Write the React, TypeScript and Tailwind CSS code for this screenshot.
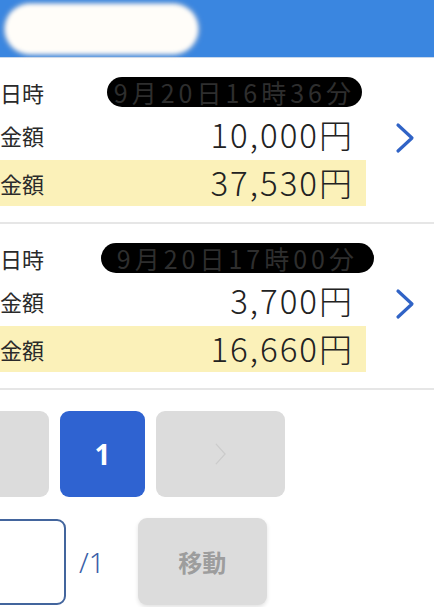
import { ReactNode } from "react";

const jp = { fontFamily: '"Noto Sans CJK JP", "Noto Sans", sans-serif' };

const records = [
  { date: "9月20日16時36分", amount: "10,000円", total: "37,530円", blob: "mr-[4px] px-[7px]" },
  { date: "9月20日17時00分", amount: "3,700円", total: "16,660円", blob: "-mr-[8px] px-[16px]" },
];

const Chevron = ({ className }: { className?: string }) => (
  <svg viewBox="0 0 20 32" className={className} fill="none">
    <path d="M3 3 L17 16 L3 29" stroke="currentColor" strokeWidth="3.2" strokeLinecap="round" strokeLinejoin="round" />
  </svg>
);

const Row = ({ label, children, className = "" }: { label: string; children: ReactNode; className?: string }) => (
  <div className={`flex items-center justify-between ${className}`}>
    <span className="text-[22px] text-[#2a2a2a]">{label}</span>
    {children}
  </div>
);

const Record = ({ date, amount, total, blob }: (typeof records)[number]) => (
  <div className="flex items-center border-b-2 border-[#e6e6e6] pt-[12px] pb-[16px]">
    <div className="w-[366px]">
      <Row label="日時" className="h-[44px]">
        <span className={`rounded-full bg-black py-[2px] text-[25px] leading-[26px] tracking-[4px] text-[#2e2e2e] ${blob}`}>
          {date}
        </span>
      </Row>
      <Row label="金額" className="h-[42px]">
        <span className="mr-[12px] text-[33px] font-light tracking-[2px] text-[#222]">{amount}</span>
      </Row>
      <Row label="金額" className="mt-[4px] h-[46px] bg-[#fbf1b9]">
        <span className="mr-[12px] text-[33px] font-light tracking-[2px] text-[#222]">{total}</span>
      </Row>
    </div>
    <div className="flex flex-1 justify-center pl-[10px]">
      <Chevron className="h-[32px] w-[20px] text-[#3063c6]" />
    </div>
  </div>
);

export default function App() {
  return (
    <div className="h-[607px] w-[434px] overflow-hidden bg-white" style={jp}>
      <header className="flex h-[58px] items-center border-b border-[#c8d8ec] bg-[#3a86e0] pl-[5px]">
        <div className="h-[50px] w-[193px] rounded-full bg-[#fffdf9] shadow-[0_0_4px_#f3d9c4] blur-[2px]" />
      </header>

      {records.map((r) => (
        <Record key={r.date} {...r} />
      ))}

      <nav className="mt-[21px] flex gap-[11px]">
        <button className="-ml-[36px] h-[86px] w-[85px] rounded-[9px] bg-[#dcdcdc]" />
        <button
          className="h-[86px] w-[85px] rounded-[9px] bg-[#2f63d1] text-[28px] font-bold text-white"
          style={{ fontFamily: '"Open Sans", "Noto Sans", sans-serif' }}
        >
          1
        </button>
        <button className="flex h-[86px] w-[129px] items-center justify-center rounded-[9px] bg-[#dcdcdc]">
          <svg viewBox="0 0 12 24" className="h-[22px] w-[11px] text-[#cbcbcb]" fill="none">
            <path d="M1 1 L11 12 L1 23" stroke="currentColor" strokeWidth="1.3" />
          </svg>
        </button>
      </nav>

      <div className="mt-[21px] flex items-center">
        <input className="-ml-[36px] h-[86px] w-[102px] rounded-[9px] border-2 border-[#43659d] bg-white" />
        <span
          className="ml-[13px] text-[28px] font-light text-[#3a5fa8]"
          style={{ fontFamily: '"Noto Sans", sans-serif' }}
        >
          /1
        </span>
        <button className="ml-[33px] h-[87px] w-[129px] rounded-[9px] bg-[#dcdcdc] text-[24px] font-bold text-[#9d9d9d] shadow-[0_2px_4px_rgba(0,0,0,0.12)]">
          移動
        </button>
      </div>
    </div>
  );
}
